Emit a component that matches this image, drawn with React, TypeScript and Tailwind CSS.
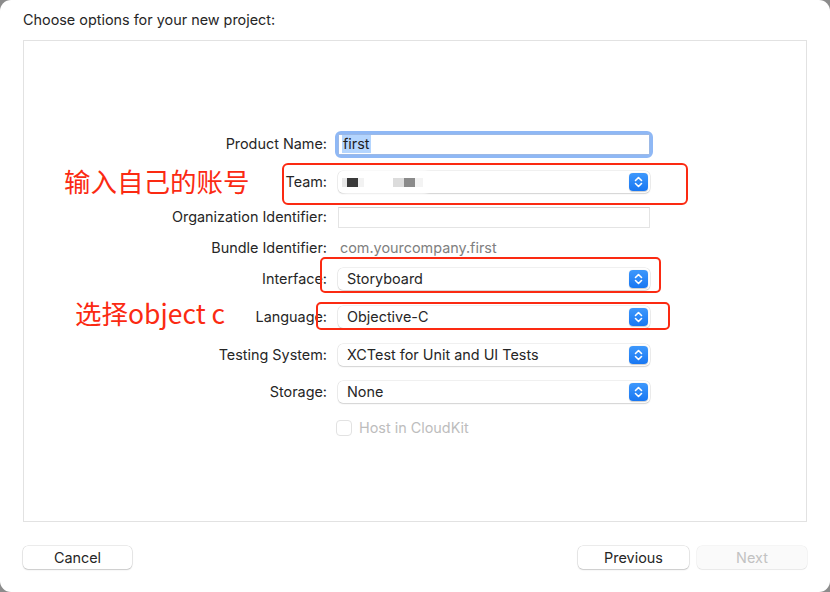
import { ReactNode } from 'react';

const font = { fontFamily: 'Inter, "Noto Sans", "Liberation Sans", sans-serif' };
const cjk = { fontFamily: '"Noto Sans CJK SC", "Noto Sans", sans-serif' };

function Chevron() {
  return (
    <span className="flex h-[18px] w-[19px] items-center justify-center rounded-[4px] bg-gradient-to-b from-[#3d98fc] to-[#1877f2] shadow-[0_0.5px_1px_rgba(0,0,0,0.2)]">
      <svg width="9" height="12" viewBox="0 0 9 12" fill="none" stroke="white" strokeWidth="1.6" strokeLinecap="round" strokeLinejoin="round">
        <path d="M1.5 4.5 L4.5 1.5 L7.5 4.5" />
        <path d="M1.5 7.5 L4.5 10.5 L7.5 7.5" />
      </svg>
    </span>
  );
}

function Popup({ children }: { children?: ReactNode }) {
  return (
    <div className="flex h-[22px] w-[312px] items-center justify-between rounded-[5px] bg-white pl-[9px] pr-[2px] text-[14.4px] text-[#262626] shadow-[0_0_0_0.5px_rgba(0,0,0,0.12),0_1px_1.5px_rgba(0,0,0,0.12)]">
      <div className="flex items-center">{children}</div>
      <Chevron />
    </div>
  );
}

function Row({ label, children, className = '' }: { label: string; children: ReactNode; className?: string }) {
  return (
    <div className={`flex items-center ${className}`}>
      <div className="w-[303px] text-right text-[14.4px] text-[#262626]">{label}</div>
      <div className="ml-[11px]">{children}</div>
    </div>
  );
}

export default function App() {
  return (
    <div className="h-[592px] w-[830px] bg-[#8c8c8c]" style={font}>
      <div className="relative flex h-[592px] w-[830px] flex-col rounded-[11px] bg-white">
        <div className="px-[23px] pt-[11px] text-[14.4px] leading-[18px] text-[#262626]">Choose options for your new project:</div>

        <div className="mx-[23px] mt-[11px] h-[482px] border border-[#e2e2e2] bg-white pt-[89px]">
          {/* Product Name */}
          <Row label="Product Name:" className="h-[28px]">
            <div className="flex h-[27px] w-[318px] -ml-[3px] items-center rounded-[6px] border-[3px] border-[#8fb8f5] bg-white">
              <div className="flex h-[21px] w-full items-center border border-[#9cb9e6] bg-white pl-[3px]">
                <span className="bg-[#b4d5fe] px-[1px] text-[14.4px] leading-[18px] text-[#1e1e1e]">first</span>
              </div>
            </div>
          </Row>

          {/* Team */}
          <Row label="Team:" className="mt-[10px] h-[28px]">
            <Popup>
              <div className="relative -ml-[6px] flex h-[20px] w-[88px] items-center rounded-[6px] bg-white shadow-[0_0_3px_2px_rgba(255,255,255,0.9)]">
                <span className="ml-[1px] h-[9px] w-[5px] bg-[#e8e8e8]" />
                <span className="h-[9px] w-[11px] bg-[#3a3a3a]" />
                <span className="h-[9px] w-[6px] bg-[#f2f2f2]" />
                <span className="ml-[29px] h-[9px] w-[11px] bg-[#dcdcdc]" />
                <span className="h-[9px] w-[11px] bg-[#8a8a8a]" />
                <span className="h-[9px] w-[8px] bg-[#f3f3f3]" />
              </div>
            </Popup>
          </Row>

          {/* Organization Identifier */}
          <Row label="Organization Identifier:" className="mt-[10px] h-[22px]">
            <div className="h-[21px] w-[312px] border border-[#e4e4e4] border-t-[#d4d4d4] bg-white" />
          </Row>

          {/* Bundle Identifier */}
          <Row label="Bundle Identifier:" className="mt-[10px] h-[20px]">
            <div className="pl-[2px] text-[14.4px] text-[#808080]">com.yourcompany.first</div>
          </Row>

          <Row label="Interface:" className="mt-[10px] h-[22px]">
            <Popup>Storyboard</Popup>
          </Row>

          <Row label="Language:" className="mt-[16px] h-[22px]">
            <Popup>Objective-C</Popup>
          </Row>

          <Row label="Testing System:" className="mt-[16px] h-[22px]">
            <Popup>XCTest for Unit and UI Tests</Popup>
          </Row>

          <Row label="Storage:" className="mt-[15px] h-[22px]">
            <Popup>None</Popup>
          </Row>

          <div className="mt-[15px] flex h-[20px] items-center pl-[312px]">
            <span className="h-[16px] w-[16px] rounded-[4px] border border-[#e2e2e2] bg-white" />
            <span className="ml-[7px] text-[14.4px] text-[#bdbdbd]">Host in CloudKit</span>
          </div>
        </div>

        {/* Bottom buttons */}
        <div className="mt-[24px] flex items-center px-[23px]">
          <button className="h-[23px] w-[109px] rounded-[5px] bg-white text-[14.4px] text-[#262626] shadow-[0_0_0_0.5px_rgba(0,0,0,0.15),0_1px_1.5px_rgba(0,0,0,0.15)]">Cancel</button>
          <div className="flex-1" />
          <button className="h-[23px] w-[111px] rounded-[5px] bg-white text-[14.4px] text-[#262626] shadow-[0_0_0_0.5px_rgba(0,0,0,0.15),0_1px_1.5px_rgba(0,0,0,0.15)]">Previous</button>
          <button disabled className="ml-[8px] h-[23px] w-[110px] rounded-[5px] bg-[#fafafa] text-[14.4px] text-[#c2c2c2] shadow-[0_0_0_0.5px_rgba(0,0,0,0.08),0_1px_1px_rgba(0,0,0,0.05)]">Next</button>
        </div>

        {/* Red annotations */}
        <div className="absolute left-[282px] top-[163px] h-[42px] w-[406px] rounded-[6px] border-[2.5px] border-[#fb2a12]" />
        <div className="absolute left-[320px] top-[257px] h-[36px] w-[341px] rounded-[5px] border-[2.5px] border-[#fb2a12]" />
        <div className="absolute left-[316px] top-[302px] h-[28px] w-[354px] rounded-[5px] border-[2.5px] border-[#fb2a12]" />
        <div className="absolute left-[64px] top-[164px] text-[26.5px] leading-[34px] text-[#fb2a12]" style={cjk}>
          输入自己的账号
        </div>
        <div className="absolute left-[75px] top-[296px] text-[26.5px] leading-[34px] text-[#fb2a12]" style={cjk}>
          选择object c
        </div>
      </div>
    </div>
  );
}
